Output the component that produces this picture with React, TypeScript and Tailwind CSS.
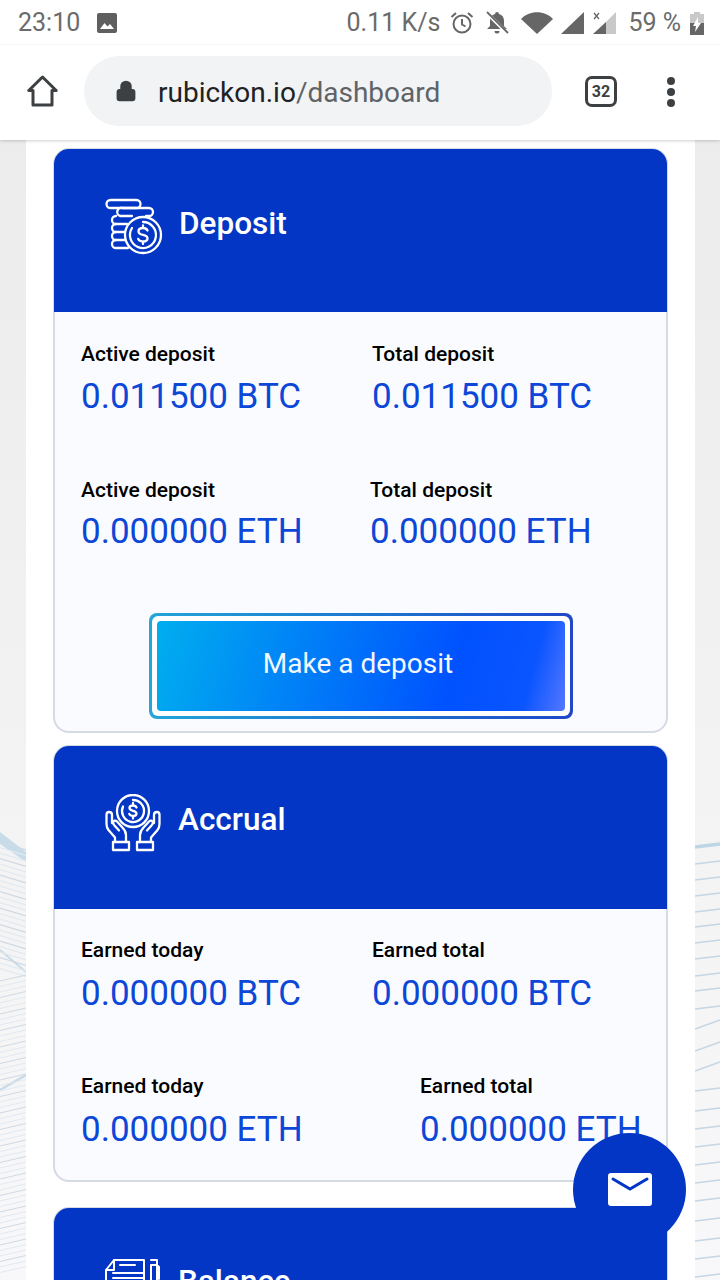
import React from 'react';
import { Lock } from 'lucide-react';

const Stat = ({ label, value, className = '', valueClass = 'mt-[7px]' }: { label: string; value: string; className?: string; valueClass?: string }) => (
    <div className={className}>
        <div className="text-[21px] leading-[24px] font-medium text-black">{label}</div>
        <div className={`text-[35px] leading-[48px] whitespace-nowrap text-[#0d47d8] ${valueClass}`}>{value}</div>
    </div>
);

const CoinsIcon = () => (
    <svg width="58" height="58" viewBox="0 0 58 58" fill="none" stroke="white" strokeWidth="2.300" strokeLinecap="round" strokeLinejoin="round">
        <rect x="1.500" y="2" width="34" height="8" rx="4" />
        <path d="M18 10h26a3.800 3.800 0 0 1 0 8h-3" />
        <path d="M18 10a3.800 3.800 0 0 0-3 8h12" />
        <path d="M11 18a3.800 3.800 0 0 0 0 8h11" />
        <path d="M11 26a3.800 3.800 0 0 0 0 8h9" />
        <path d="M11 34a3.800 3.800 0 0 0 0 8h9" />
        <path d="M11 42a3.800 3.800 0 0 0 0 8h12" />
        <circle cx="38" cy="37" r="18" />
        <path d="M38 24a13 13 0 1 1-11 6" />
        <path d="M42.500 32.500c-.8-1.800-2.500-2.500-4.500-2.500-2.700 0-4.500 1.400-4.500 3.400 0 4.800 9 2.200 9 6.800 0 2-1.800 3.300-4.500 3.300-2.300 0-4.100-.9-4.800-2.600M38 27.500V30M38 43.500V46" />
    </svg>
);

const HandsIcon = () => (
    <svg width="58" height="58" viewBox="0 0 58 58" fill="none" stroke="white" strokeWidth="2.300" strokeLinecap="round" strokeLinejoin="round">
        <circle cx="28" cy="17" r="16" />
        <path d="M28 6a11 11 0 1 1-10 6.500" />
        <path d="M31.500 13.500c-.6-1.500-2-2-3.500-2-2.100 0-3.500 1-3.500 2.600 0 3.700 7 1.700 7 5.300 0 1.500-1.400 2.500-3.500 2.500-1.800 0-3.200-.7-3.700-2M28 9v2.500M28 22v2.500" />
        <path d="M10 48v-4.500L3.500 36c-1.500-2-2-3.500-2-6V21c0-2 1-3 2.500-3S7 19 7 21v8" />
        <path d="M21 48v-7c0-3.500-1.500-5.500-4-8l-5-5.500c-1.500-1.500-3.500-.8-3.800.5-.4 1.200.3 2.500 1.300 3.500l4.500 5" />
        <rect x="8" y="48" width="16" height="8" />
        <path d="M46 48v-4.500L52.500 36c1.500-2 2-3.500 2-6V21c0-2-1-3-2.500-3s-3 1-3 3v8" />
        <path d="M35 48v-7c0-3.500 1.500-5.500 4-8l5-5.500c1.500-1.500 3.500-.8 3.800.5.400 1.200-.3 2.500-1.300 3.500l-4.500 5" />
        <rect x="32" y="48" width="16" height="8" />
    </svg>
);

const BalanceIcon = () => (
    <svg width="56" height="58" viewBox="0 0 56 58" fill="none" stroke="white" strokeWidth="2" strokeLinecap="round" strokeLinejoin="round">
        <path d="M1 14L9 4h30v44H1z" />
        <path d="M1 14h8V4M15 9h15M8 17h30M8 22h30" />
        <circle cx="20" cy="34" r="8" />
        <path d="M46 4h6v5l2 2v12M46 9h6M46 9v40l3 5 3-5V9" />
    </svg>
);

// decorative wave lines behind the page column, drawn in screen coordinates
const leftLines = Array.from({ length: 78 }, (_, i) => 846 + i * 5.500);
const rightLines = [863, 879, 895, 911, 926, 942, 958, 975, 990, 1008, 1028, 1050, 1070, 1090, 1110, 1128, 1146, 1164, 1182, 1200, 1220, 1240, 1258, 1276];

const LeftWaves = () => (
    <svg className="absolute left-0 top-0 h-full w-[26px]" viewBox="0 140 26 1140" preserveAspectRatio="none" fill="none">
        <path d="M0 832L26 852V862L0 844Z" fill="#c6dde9" />
        <path d="M0 950L26 972" stroke="#c9dbe6" strokeWidth="2" />
        <path d="M0 1090L26 1075" stroke="#c9dbe6" strokeWidth="2.500" />
        {leftLines.map((y, i) => (
            <path key={y} d={`M0 ${y + (i < 24 ? -4 : 3)}L26 ${y + (i < 24 ? 4 : -3)}`} stroke={i % 3 === 0 ? '#cfd9e3' : '#e2e9f0'} strokeWidth="1.200" />
        ))}
    </svg>
);

const RightWaves = () => (
    <svg className="absolute right-0 top-0 h-full w-[25px]" viewBox="0 140 25 1140" preserveAspectRatio="none" fill="none">
        <path d="M0 847L25 844" stroke="#bdd6e5" strokeWidth="3.500" />
        {rightLines.map((y, i) => (
            <path key={y} d={`M0 ${y + 1}L25 ${y - (i > 9 && i < 13 ? 8 : 2)}`} stroke="#c5d5e3" strokeWidth="1.500" />
        ))}
    </svg>
);

const Card = ({ title, icon, titleClass, headClass, children }: { title: string; icon: React.ReactNode; titleClass: string; headClass: string; children: React.ReactNode }) => (
    <div className="rounded-[16px] border-2 border-[#d5dae3] bg-[#f9fbff]">
        <div className={`h-[163px] rounded-t-[15px] bg-[#0336c4] flex items-start pl-[51px] -mx-[1px] -mt-[1px] ${headClass}`}>
            {icon}
            <span className={`text-[31.500px] leading-[40px] font-medium text-white ${titleClass}`}>{title}</span>
        </div>
        {children}
    </div>
);

export default function App() {
    return (
        <div className="relative w-[720px] h-[1280px] overflow-hidden bg-white flex flex-col" style={{ fontFamily: 'Roboto, sans-serif' }}>
            {/* Status bar */}
            <div className="h-[45px] shrink-0 flex items-center pl-[18px] pr-[16px] pt-[1px] text-[25px] text-[#6b6b6b]">
                <span>23:10</span>
                <svg className="ml-[17px]" width="20" height="20" viewBox="0 0 20 20">
                    <rect width="20" height="20" rx="2" fill="#5f5f5f" />
                    <path d="M3 16l4.500-6 3 3.500 2.500-2.500 4 5z" fill="white" />
                </svg>
                <span className="ml-auto">0.11 K/s</span>
                <svg className="ml-[10px]" width="24" height="24" viewBox="0 0 24 24" fill="none" stroke="#666" strokeWidth="2">
                    <circle cx="12" cy="13" r="8.500" />
                    <path d="M12 8v5.500l3.500 2M1.500 6L6 2M22.500 6L18 2" />
                </svg>
                <svg className="ml-[11px]" width="24" height="24" viewBox="0 0 24 24">
                    <path d="M12 1a2 2 0 0 1 2 2c3.500 1 5 3.500 5 7v5l3 3H2l3-3v-5c0-3.500 1.500-6 5-7a2 2 0 0 1 2-2zM9.500 20h5a2.500 2.500 0 0 1-5 0z" fill="#666" />
                    <path d="M2 2l21 21" stroke="white" strokeWidth="3.500" />
                    <path d="M2 1l21 21" stroke="#666" strokeWidth="1.800" />
                </svg>
                <svg className="ml-[12px]" width="32" height="24" viewBox="0 0 32 24">
                    <path d="M0 8C8-1 24-1 32 8L16 23z" fill="#666" />
                </svg>
                <svg className="ml-[8px]" width="24" height="24" viewBox="0 0 24 24">
                    <path d="M0 23L23 1v22z" fill="#666" />
                </svg>
                <svg className="ml-[8px]" width="24" height="24" viewBox="0 0 24 24">
                    <path d="M0 23L13 11v12z" fill="#666" />
                    <path d="M13 11L23 1v22H13z" fill="#c9c9c9" />
                    <path d="M1 2l5 6M6 2L1 8" stroke="#666" strokeWidth="1.300" />
                </svg>
                <span className="ml-[11px]">59 %</span>
                <svg className="ml-[9px]" width="14" height="24" viewBox="0 0 14 24">
                    <path d="M4 1h6v2h4v21H0V3h4z" fill="#c9c9c9" />
                    <path d="M0 12h14v12H0z" fill="#666" />
                    <path d="M8 6L3 15h3l-1 6 6-9H8z" fill="white" />
                </svg>
            </div>

            {/* Browser toolbar */}
            <div className="relative z-10 h-[95px] shrink-0 bg-white flex items-start pl-[27px] shadow-[0_1px_3px_rgba(0,0,0,0.2)]">
                <svg className="mt-[30px]" width="31" height="32" viewBox="0 0 31 32" fill="none" stroke="#3c4043" strokeWidth="3" strokeLinejoin="round">
                    <path d="M15.500 2L1.800 15.500H6V30h19V15.500h4.200z" />
                </svg>
                <div className="ml-[26px] mt-[11px] w-[468px] h-[70px] rounded-full bg-[#f1f3f4] flex items-center pl-[31px]">
                    <Lock size={22} color="#3c4043" fill="#3c4043" strokeWidth={2.500} />
                    <span className="ml-[21px] mt-[3px] text-[28px] text-[#202124]">rubickon.io<span className="text-[#5f6368]">/dashboard</span></span>
                </div>
                <div className="ml-[33px] mt-[31px] w-[32px] h-[31px] rounded-[7px] border-[3px] border-[#3c4043] flex items-center justify-center text-[16px] font-bold text-[#3c4043]">32</div>
                <div className="ml-[50px] mt-[32px] flex flex-col gap-[3px]">
                    <div className="w-[8px] h-[8px] rounded-full bg-[#3c4043]" />
                    <div className="w-[8px] h-[8px] rounded-full bg-[#3c4043]" />
                    <div className="w-[8px] h-[8px] rounded-full bg-[#3c4043]" />
                </div>
            </div>

            {/* Page */}
            <div className="relative flex-1 bg-gradient-to-b from-[#ececec] via-[#f2f2f2] to-[#f8f8fa] overflow-hidden">
                <LeftWaves />
                <RightWaves />
                <div className="relative ml-[26px] w-[669px] h-full bg-white pl-[27px] pt-[8px]">
                    <div className="w-[615px]">
                        <Card title="Deposit" icon={<CoinsIcon />} titleClass="ml-[16px] mt-[6px]" headClass="pt-[49px]">
                            <div className="pl-[26px] pt-[30px]">
                                <div className="flex">
                                    <Stat className="w-[291px]" label="Active deposit" value="0.011500 BTC" />
                                    <Stat label="Total deposit" value="0.011500 BTC" />
                                </div>
                                <div className="flex mt-[57px]">
                                    <Stat className="w-[289px]" valueClass="mt-[6px]" label="Active deposit" value="0.000000 ETH" />
                                    <Stat valueClass="mt-[6px]" label="Total deposit" value="0.000000 ETH" />
                                </div>
                            </div>
                            <div className="mt-[57px] ml-[94px] mb-[12px] w-[424px] h-[106px] rounded-[8px] p-[3px] bg-gradient-to-r from-[#25a5d8] to-[#2147c8]">
                                <div className="w-full h-full rounded-[6px] bg-white p-[5px]">
                                    <div className="w-full h-full rounded-[4px] bg-[linear-gradient(105deg,#00aeef_0%,#0052ff_72%,#0a55ff_90%,#5577ff_100%)] flex items-center justify-center text-[28px] text-[#f2f8ff] pr-[6px] pb-[5px]">
                                        Make a deposit
                                    </div>
                                </div>
                            </div>
                        </Card>
                        <div className="h-[12px]" />
                        <Card title="Accrual" icon={<HandsIcon />} titleClass="ml-[15px] mt-[6px]" headClass="pt-[48px]">
                            <div className="pl-[26px] pt-[29px] pb-[26px]">
                                <div className="flex">
                                    <Stat className="w-[291px]" valueClass="mt-[8px]" label="Earned today" value="0.000000 BTC" />
                                    <Stat valueClass="mt-[8px]" label="Earned total" value="0.000000 BTC" />
                                </div>
                                <div className="flex mt-[56px]">
                                    <Stat className="w-[339px]" valueClass="mt-[8px]" label="Earned today" value="0.000000 ETH" />
                                    <Stat valueClass="mt-[8px]" label="Earned total" value="0.000000 ETH" />
                                </div>
                            </div>
                        </Card>
                        <div className="h-[25px]" />
                        <Card title="Balance" icon={<BalanceIcon />} titleClass="ml-[17px] mt-[6px]" headClass="pt-[48px]">
                            <div className="h-[100px]" />
                        </Card>
                    </div>
                </div>
            </div>

            {/* Floating contact button */}
            <button type="button" className="absolute z-20 left-[573px] top-[1133px] w-[113px] h-[113px] rounded-full bg-[#0336c4] flex items-center justify-center">
                <svg width="44" height="34" viewBox="0 0 44 34">
                    <rect width="44" height="33" rx="3" fill="white" />
                    <path d="M5 6l17 10L39 6" fill="none" stroke="#0336c4" strokeWidth="3" strokeLinecap="round" />
                </svg>
            </button>
        </div>
    );
}
